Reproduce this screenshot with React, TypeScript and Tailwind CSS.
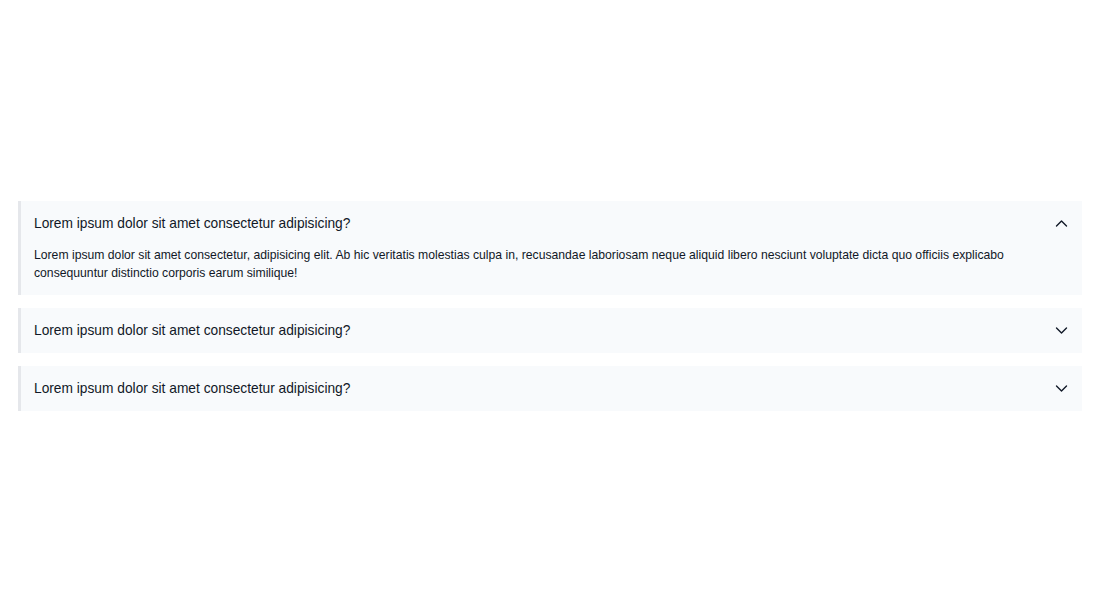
import { useState } from 'react';

const faqs = [
  {
    q: 'Lorem ipsum dolor sit amet consectetur adipisicing?',
    a: 'Lorem ipsum dolor sit amet consectetur, adipisicing elit. Ab hic veritatis molestias culpa in, recusandae laboriosam neque aliquid libero nesciunt voluptate dicta quo officiis explicabo consequuntur distinctio corporis earum similique!',
  },
  {
    q: 'Lorem ipsum dolor sit amet consectetur adipisicing?',
    a: 'Lorem ipsum dolor sit amet consectetur, adipisicing elit. Ab hic veritatis molestias culpa in, recusandae laboriosam neque aliquid libero nesciunt voluptate dicta quo officiis explicabo consequuntur distinctio corporis earum similique!',
  },
  {
    q: 'Lorem ipsum dolor sit amet consectetur adipisicing?',
    a: 'Lorem ipsum dolor sit amet consectetur, adipisicing elit. Ab hic veritatis molestias culpa in, recusandae laboriosam neque aliquid libero nesciunt voluptate dicta quo officiis explicabo consequuntur distinctio corporis earum similique!',
  },
];

const Chevron = ({ up }: { up: boolean }) => (
  <svg width="15" height="15" viewBox="0 0 24 24" fill="none" stroke="currentColor" strokeWidth="2.2" strokeLinecap="round" strokeLinejoin="round">
    {up ? <path d="M4 16l8-8 8 8" /> : <path d="M4 8l8 8 8-8" />}
  </svg>
);

const App = () => {
  const [open, setOpen] = useState<number | null>(0);

  return (
    <main className="min-h-screen flex items-center bg-white px-[18px] font-['Liberation_Sans',Arial,sans-serif] text-[#111827]">
      <div className="w-full flex flex-col gap-[13px]">
        {faqs.map((item, i) => (
          <div key={i} className="bg-[#f8fafc] border-l-[3px] border-[#e5e7eb]">
            <button
              type="button"
              onClick={() => setOpen(open === i ? null : i)}
              className="w-full flex items-center justify-between pl-[13px] pr-[13px] py-[13px] text-left text-[13.75px] leading-[19px]"
            >
              <span>{item.q}</span>
              <Chevron up={open === i} />
            </button>
            {open === i && (
              <p className="pl-[13px] pr-[60px] pb-[13px] text-[12.2px] leading-[18px]">{item.a}</p>
            )}
          </div>
        ))}
      </div>
    </main>
  );
};

export default App;
